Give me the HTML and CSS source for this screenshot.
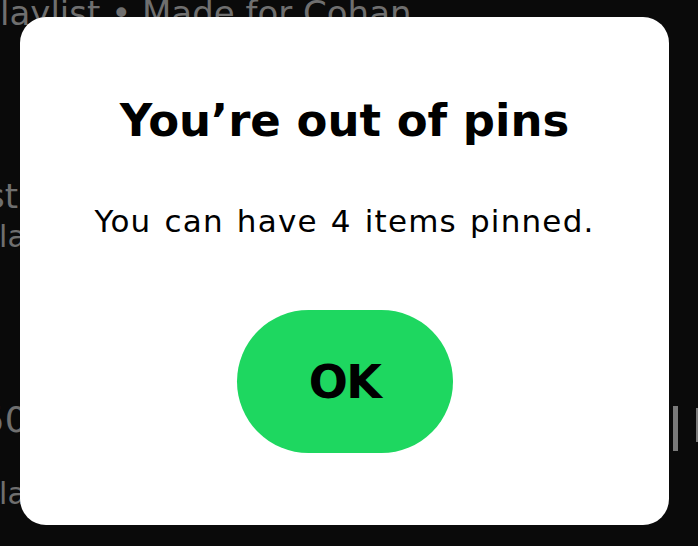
FILE: index.html
```html
<!DOCTYPE html>
<html>
<head>
<meta charset="utf-8">
<link rel="stylesheet" href="styles.css">
</head>
<body>
<div class="bg">
  <div class="row r1">laylist • Made for Cohan</div>
  <div class="row r2">Artist Mix</div>
  <div class="row r3">Playlist • Made for Cohan</div>
  <div class="row r4"><span class="cut">1950s Mix</span><span class="bars"><span class="bar"></span><span class="bar b2"></span></span></div>
  <div class="row r5">Playlist • Made for Cohan</div>
</div>
<div class="modal">
  <h1 class="title">You’re out of pins</h1>
  <p class="msg">You can have 4 items pinned.</p>
  <button class="ok">OK</button>
</div>
</body>
</html>
```
FILE: styles.css
```css
html, body {
  margin: 0;
  padding: 0;
  width: 698px;
  height: 546px;
  overflow: hidden;
  background: #0a0a0a;
  font-family: "DejaVu Sans", "Liberation Sans", sans-serif;
}
.bg {
  display: flex;
  flex-direction: column;
  color: #6f6f6f;
}
.row {
  white-space: nowrap;
}
.r1 { margin-top: -4px; font-size: 34px; line-height: 34px; }
.r2 { margin-top: 149px; font-size: 34px; line-height: 34px; margin-left: -73px; }
.r3 { margin-top: 9px; font-size: 30px; line-height: 30px; margin-left: -19px; }
.r4 { margin-top: 150px; font-size: 36px; line-height: 36px; display: flex; justify-content: space-between; align-items: flex-start; }
.r4 .cut { margin-left: -64px; }
.bars { display: flex; gap: 18px; margin-top: 4px; margin-right: -3px; }
.bar { width: 5px; height: 45px; background: #7a7a7a; }
.bar.b2 { height: 34px; margin-top: 2px; }
.r5 { margin-top: 28px; font-size: 30px; line-height: 30px; margin-left: -19px; }

.modal {
  position: absolute;
  left: 20px;
  top: 17px;
  width: 649px;
  height: 508px;
  background: #ffffff;
  border-radius: 26px;
  display: flex;
  flex-direction: column;
  align-items: center;
  box-sizing: border-box;
  padding-top: 77px;
}
.title {
  margin: 0;
  font-size: 45px;
  line-height: 54px;
  font-weight: 700;
  letter-spacing: 0;
  color: #000;
}
.msg {
  margin: 55px 0 0;
  font-size: 31px;
  line-height: 36px;
  font-weight: 400;
  letter-spacing: 1.2px;
  word-spacing: 2px;
  color: #000;
}
.ok {
  margin-top: 71px;
  width: 216px;
  height: 143px;
  border: none;
  border-radius: 72px;
  background: #1ed760;
  color: #000;
  font-family: inherit;
  font-size: 46px;
  font-weight: 700;
  letter-spacing: -1.5px;
  padding: 0;
}
```
